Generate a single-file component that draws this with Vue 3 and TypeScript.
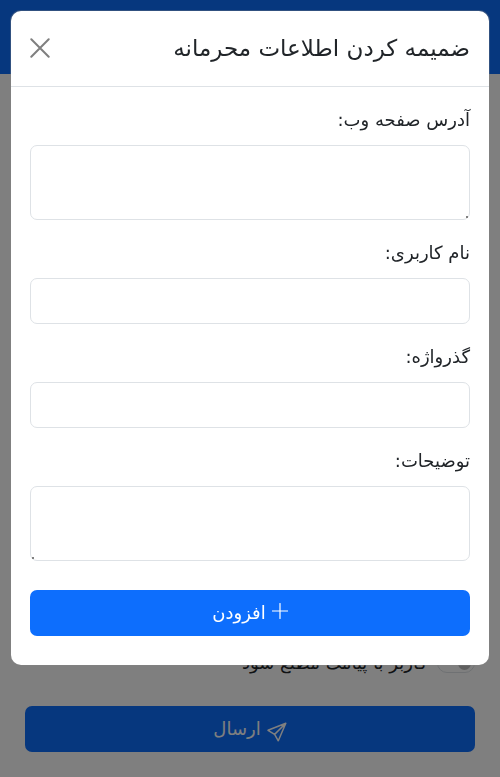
<script setup lang="ts">
import { ref } from 'vue'

interface Field {
  id: string
  label: string
  kind: 'area' | 'text' | 'password'
  dir: 'ltr' | 'rtl'
}

const fields: Field[] = [
  { id: 'url', label: 'آدرس صفحه وب:', kind: 'area', dir: 'ltr' },
  { id: 'username', label: 'نام کاربری:', kind: 'text', dir: 'ltr' },
  { id: 'password', label: 'گذرواژه:', kind: 'password', dir: 'ltr' },
  { id: 'notes', label: 'توضیحات:', kind: 'area', dir: 'rtl' },
]

const values = ref<Record<string, string>>({ url: '', username: '', password: '', notes: '' })
const notify = ref(false)
const open = ref(true)
</script>

<template>
  <div class="page" dir="rtl">
    <header class="topbar"></header>
    <main class="compose">
      <label class="switch-row">
        <input v-model="notify" class="switch" type="checkbox" />
        <span>کاربر با پیامک مطلع شود</span>
      </label>
      <button class="btn" type="button">
        <svg class="icon send" viewBox="0 0 20 20" aria-hidden="true">
          <path d="M18.8 1.2 L11.3 18.8 L7.6 12.4 L1 8.3 Z M18.8 1.2 L7.6 12.4" />
        </svg>
        <span>ارسال</span>
      </button>
    </main>

    <div v-if="open" class="backdrop">
      <section class="modal" role="dialog" aria-modal="true" aria-labelledby="modal-title">
        <header class="modal-header">
          <h1 id="modal-title">ضمیمه کردن اطلاعات محرمانه</h1>
          <button class="close" type="button" aria-label="بستن" @click="open = false">
            <svg viewBox="0 0 20 20" aria-hidden="true"><path d="M1.3 1.3 L18.7 18.7 M18.7 1.3 L1.3 18.7" /></svg>
          </button>
        </header>
        <form class="modal-body" @submit.prevent>
          <div v-for="field in fields" :key="field.id" class="field">
            <label :for="field.id">{{ field.label }}</label>
            <div v-if="field.kind === 'area'" class="area" :dir="field.dir">
              <textarea :id="field.id" v-model="values[field.id]" class="control"></textarea>
            </div>
            <input v-else :id="field.id" v-model="values[field.id]" class="control" :type="field.kind" :dir="field.dir" />
          </div>
          <button class="btn add" type="submit">
            <svg class="icon plus" viewBox="0 0 16 16" aria-hidden="true"><path d="M8 0.5 V15.5 M0.5 8 H15.5" /></svg>
            <span>افزودن</span>
          </button>
        </form>
      </section>
    </div>
  </div>
</template>

<style>
body {
  margin: 0;
  background: #fff;
}
</style>

<style scoped>
* {
  box-sizing: border-box;
}
.page {
  display: flex;
  flex-direction: column;
  min-height: 100vh;
  color: #212529;
  font-family: "DejaVu Sans", sans-serif;
  font-size: 18px;
  line-height: 30px;
}
.topbar {
  height: 74px;
  background: #0d6efd;
}
.compose {
  display: flex;
  flex: 1;
  flex-direction: column;
  justify-content: flex-end;
  gap: 28px;
  padding: 25px;
}
.switch-row {
  display: flex;
  align-items: center;
  gap: 10px;
}
.switch {
  appearance: none;
  display: flex;
  align-items: center;
  width: 38px;
  height: 20px;
  margin: 0;
  padding: 0 3px;
  border: 1px solid #dee2e6;
  border-radius: 10px;
}
.switch::before {
  content: "";
  width: 13px;
  height: 13px;
  border-radius: 50%;
  background: #bfbfbf;
}
.switch:checked {
  justify-content: flex-end;
  background: #0d6efd;
}
.btn {
  display: flex;
  align-items: center;
  justify-content: center;
  gap: 6px;
  width: 100%;
  height: 46px;
  padding: 0;
  border: 0;
  border-radius: 7px;
  background: #0d6efd;
  color: #fff;
  font: inherit;
  cursor: pointer;
}
.icon {
  fill: none;
  stroke: currentColor;
  stroke-linejoin: round;
  stroke-linecap: round;
}
.send {
  width: 20px;
  height: 20px;
  margin-top: 6px;
  stroke-width: 1.5;
}
.plus {
  width: 16px;
  height: 16px;
  margin-bottom: 4px;
  stroke-width: 1.2;
}
.backdrop {
  position: fixed;
  inset: 0;
  overflow: auto;
  padding: 11px;
  background: rgb(0 0 0 / 50%);
}
.modal {
  border-radius: 10px;
  background: #fff;
  box-shadow: 0 0 0 1px rgb(128 128 128 / 35%);
}
.modal-header {
  display: flex;
  align-items: center;
  justify-content: space-between;
  height: 76px;
  padding: 0 19px 2px;
  border-bottom: 1px solid #dee2e6;
}
h1 {
  margin: 0;
  font-size: 23px;
  font-weight: 400;
  line-height: 36px;
}
.close {
  display: flex;
  padding: 0;
  border: 0;
  background: none;
  color: #7f7f7f;
  cursor: pointer;
}
.close svg {
  width: 20px;
  height: 20px;
  fill: none;
  stroke: currentColor;
  stroke-width: 2;
  stroke-linecap: round;
}
.modal-body {
  display: flex;
  flex-direction: column;
  gap: 18px;
  padding: 18px 19px 29px;
}
.field {
  display: flex;
  flex-direction: column;
  gap: 10px;
}
.control {
  display: block;
  width: 100%;
  height: 46px;
  padding: 8px 14px;
  border: 1px solid #dee2e6;
  border-radius: 7px;
  background: #fff;
  color: inherit;
  font: inherit;
  outline: none;
}
.control:focus {
  border-color: #86b7fe;
}
.area {
  position: relative;
}
.area .control {
  height: 75px;
  resize: none;
}
.area::after {
  content: "";
  position: absolute;
  inset-inline-end: 2px;
  bottom: 2px;
  width: 2px;
  height: 2px;
  background: #808080;
}
.add {
  margin-top: 11px;
}
</style>
